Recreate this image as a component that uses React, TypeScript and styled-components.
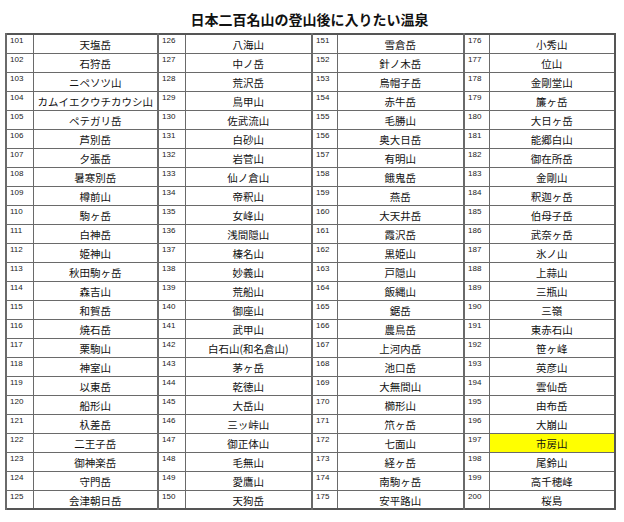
import React from "react";
import styled, { createGlobalStyle } from "styled-components";

const GlobalStyle = createGlobalStyle`
  body {
    margin: 0;
    background-color: #ffffff;
    font-family: "Noto Sans CJK JP", "Liberation Sans", sans-serif;
  }
`;

const names: string[] = [
  // 101-125
  "天塩岳", "石狩岳", "ニペソツ山", "カムイエクウチカウシ山", "ペテガリ岳",
  "芦別岳", "夕張岳", "暑寒別岳", "樽前山", "駒ヶ岳",
  "白神岳", "姫神山", "秋田駒ヶ岳", "森吉山", "和賀岳",
  "焼石岳", "栗駒山", "神室山", "以東岳", "船形山",
  "杁差岳", "二王子岳", "御神楽岳", "守門岳", "会津朝日岳",
  // 126-150
  "八海山", "中ノ岳", "荒沢岳", "鳥甲山", "佐武流山",
  "白砂山", "岩菅山", "仙ノ倉山", "帝釈山", "女峰山",
  "浅間隠山", "榛名山", "妙義山", "荒船山", "御座山",
  "武甲山", "白石山(和名倉山)", "茅ヶ岳", "乾徳山", "大岳山",
  "三ッ峠山", "御正体山", "毛無山", "愛鷹山", "天狗岳",
  // 151-175
  "雪倉岳", "針ノ木岳", "烏帽子岳", "赤牛岳", "毛勝山",
  "奥大日岳", "有明山", "餓鬼岳", "燕岳", "大天井岳",
  "霞沢岳", "黒姫山", "戸隠山", "飯縄山", "鋸岳",
  "農鳥岳", "上河内岳", "池口岳", "大無間山", "櫛形山",
  "笊ヶ岳", "七面山", "経ヶ岳", "南駒ヶ岳", "安平路山",
  // 176-200
  "小秀山", "位山", "金剛堂山", "簾ヶ岳", "大日ヶ岳",
  "能郷白山", "御在所岳", "金剛山", "釈迦ヶ岳", "伯母子岳",
  "武奈ヶ岳", "氷ノ山", "上蒜山", "三瓶山", "三嶺",
  "東赤石山", "笹ヶ峰", "英彦山", "雲仙岳", "由布岳",
  "大崩山", "市房山", "尾鈴山", "高千穂峰", "桜島",
];

const highlighted = new Set([197]);

const ROWS = 25;
const GROUPS = 4;

const App = () => {
  const rows = Array.from({ length: ROWS }, (_, r) => r);
  const groups = Array.from({ length: GROUPS }, (_, g) => g);

  return (
    <Page>
      <GlobalStyle />
      <Title>日本二百名山の登山後に入りたい温泉</Title>
      <Table>
        <colgroup>
          <NumCol $w={27} />
          <NameCol $w={125} />
          <NumCol $w={27} />
          <NameCol $w={127} />
          <NumCol $w={25} />
          <NameCol $w={127} />
          <NumCol $w={25} />
          <NameCol $w={126} />
        </colgroup>
        <tbody>
          {rows.map((r) => (
            <Row key={r}>
              {groups.map((g) => {
                const no = 101 + g * ROWS + r;
                return (
                  <React.Fragment key={g}>
                    <NumCell>{no}</NumCell>
                    <NameCell $mark={highlighted.has(no)}>
                      {names[no - 101]}
                    </NameCell>
                  </React.Fragment>
                );
              })}
            </Row>
          ))}
        </tbody>
      </Table>
    </Page>
  );
};

export default App;

const Page = styled.div`
  width: 624px;
  padding: 0 0 0 5px;
  box-sizing: border-box;
`;

const Title = styled.h1`
  margin: 0;
  height: 33px;
  width: 609px;
  display: flex;
  align-items: center;
  justify-content: center;
  padding-top: 5px;
  box-sizing: border-box;
  font-size: 14px;
  font-weight: 700;
  color: #111;
  letter-spacing: 0;
`;

const Table = styled.table`
  border-collapse: collapse;
  table-layout: fixed;
  width: 609px;
  border: 2px solid #555;
`;

const NumCol = styled.col<{ $w: number }>`
  width: ${(p) => p.$w}px;
`;

const NameCol = styled.col<{ $w: number }>`
  width: ${(p) => p.$w}px;
`;

const Row = styled.tr`
  height: 19px;
`;

const NumCell = styled.td`
  border: 1px solid #6a6a6a;
  border-left-width: 2px;
  padding: 1px 0 0 3px;
  vertical-align: top;
  font-family: "Liberation Sans", Arial, sans-serif;
  font-size: 8px;
  line-height: 9px;
  color: #222;
`;

const NameCell = styled.td<{ $mark?: boolean }>`
  border: 1px solid #6a6a6a;
  padding: 3px 0 0 0;
  text-align: center;
  vertical-align: middle;
  font-size: 10.5px;
  line-height: 14px;
  color: #111;
  white-space: nowrap;
  overflow: hidden;
  background-color: ${(p) => (p.$mark ? "#ffff00" : "transparent")};
`;
